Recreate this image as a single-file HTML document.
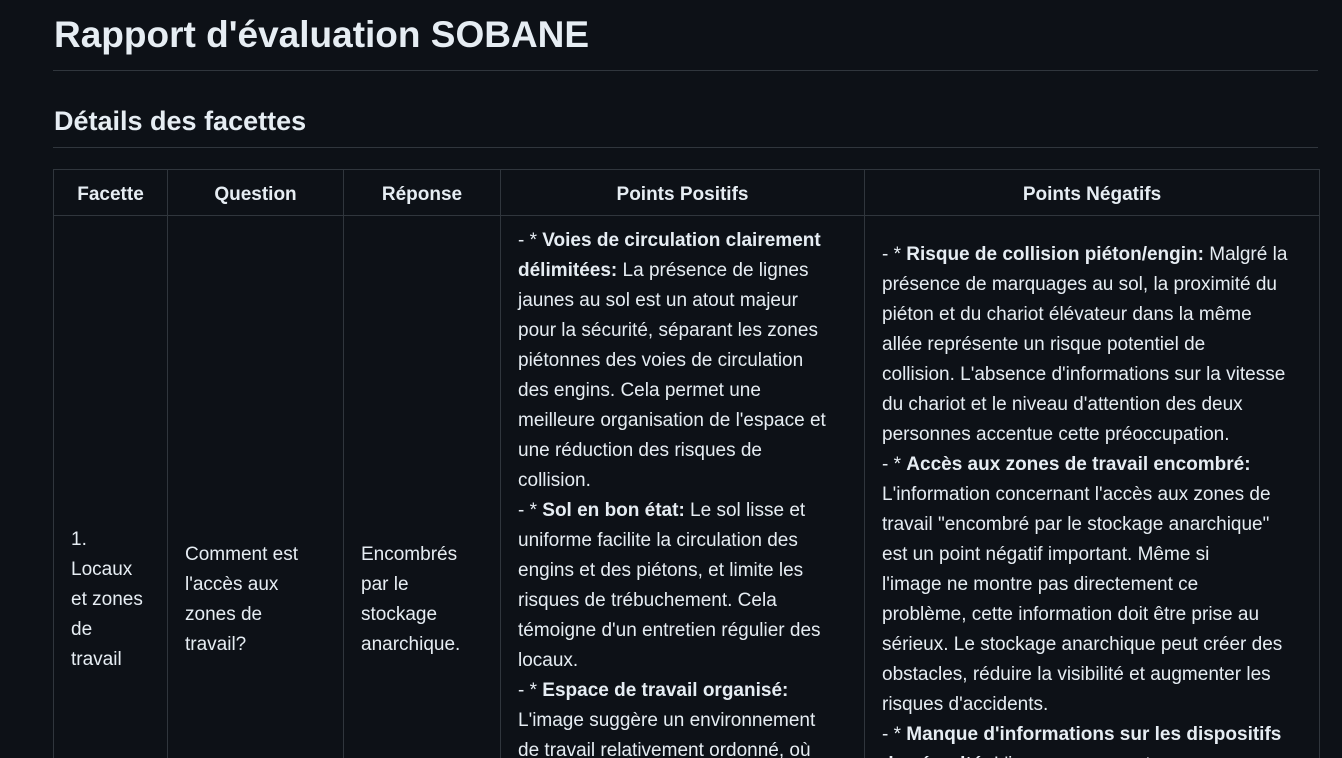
<!DOCTYPE html>
<html><head><meta charset="utf-8"><style>
html,body{margin:0;padding:0;background:#0d1117;color:#e6edf3;font-family:"Liberation Sans",sans-serif;overflow:hidden;width:1342px;height:758px}
#wrap{position:relative;width:1342px;height:758px;overflow:hidden}
h1{position:absolute;left:54px;top:12px;margin:0;font-size:37px;font-weight:bold;line-height:46px}
.hr1{position:absolute;left:53px;top:70px;width:1265px;height:1px;background:#30363d}
h2{position:absolute;left:54px;top:103px;margin:0;font-size:27px;font-weight:bold;line-height:36px}
.hr2{position:absolute;left:53px;top:147px;width:1265px;height:1px;background:#30363d}
table{position:absolute;left:53px;top:169px;width:1266px;table-layout:fixed;border-collapse:collapse;font-size:19px;line-height:30px}
td,th{border:1px solid #30363d;vertical-align:top;padding:0 10px 0 17px;white-space:nowrap;overflow:hidden}
th{vertical-align:middle;text-align:center;font-weight:bold;padding:4px 0 0 0;height:46px;box-sizing:border-box}
</style></head><body><div id="wrap">
<h1>Rapport d'évaluation SOBANE</h1><div class="hr1"></div>
<h2>Détails des facettes</h2><div class="hr2"></div>
<table>
<colgroup><col style="width:114px"><col style="width:176px"><col style="width:157px"><col style="width:364px"><col style="width:455px"></colgroup>
<tr><th>Facette</th><th>Question</th><th>Réponse</th><th>Points Positifs</th><th>Points Négatifs</th></tr>
<tr>
<td style="padding-top:309px;height:260px">1.<br>Locaux<br>et zones<br>de<br>travail</td>
<td style="padding-top:324px">Comment est<br>l'accès aux<br>zones de<br>travail?</td>
<td style="padding-top:324px">Encombrés<br>par le<br>stockage<br>anarchique.</td>
<td style="padding-top:10px">- * <b>Voies de circulation clairement<br>délimitées:</b> La présence de lignes<br>jaunes au sol est un atout majeur<br>pour la sécurité, séparant les zones<br>piétonnes des voies de circulation<br>des engins. Cela permet une<br>meilleure organisation de l'espace et<br>une réduction des risques de<br>collision.<br>- * <b>Sol en bon état:</b> Le sol lisse et<br>uniforme facilite la circulation des<br>engins et des piétons, et limite les<br>risques de trébuchement. Cela<br>témoigne d'un entretien régulier des<br>locaux.<br>- * <b>Espace de travail organisé:</b><br>L'image suggère un environnement<br>de travail relativement ordonné, où</td>
<td style="padding-top:24px">- * <b>Risque de collision piéton/engin:</b> Malgré la<br>présence de marquages au sol, la proximité du<br>piéton et du chariot élévateur dans la même<br>allée représente un risque potentiel de<br>collision. L'absence d'informations sur la vitesse<br>du chariot et le niveau d'attention des deux<br>personnes accentue cette préoccupation.<br>- * <b>Accès aux zones de travail encombré:</b><br>L'information concernant l'accès aux zones de<br>travail "encombré par le stockage anarchique"<br>est un point négatif important. Même si<br>l'image ne montre pas directement ce<br>problème, cette information doit être prise au<br>sérieux. Le stockage anarchique peut créer des<br>obstacles, réduire la visibilité et augmenter les<br>risques d'accidents.<br>- * <b>Manque d'informations sur les dispositifs<br>de sécurité:</b> L'image ne permet pas</td>
</tr>
</table>
</div></body></html>
